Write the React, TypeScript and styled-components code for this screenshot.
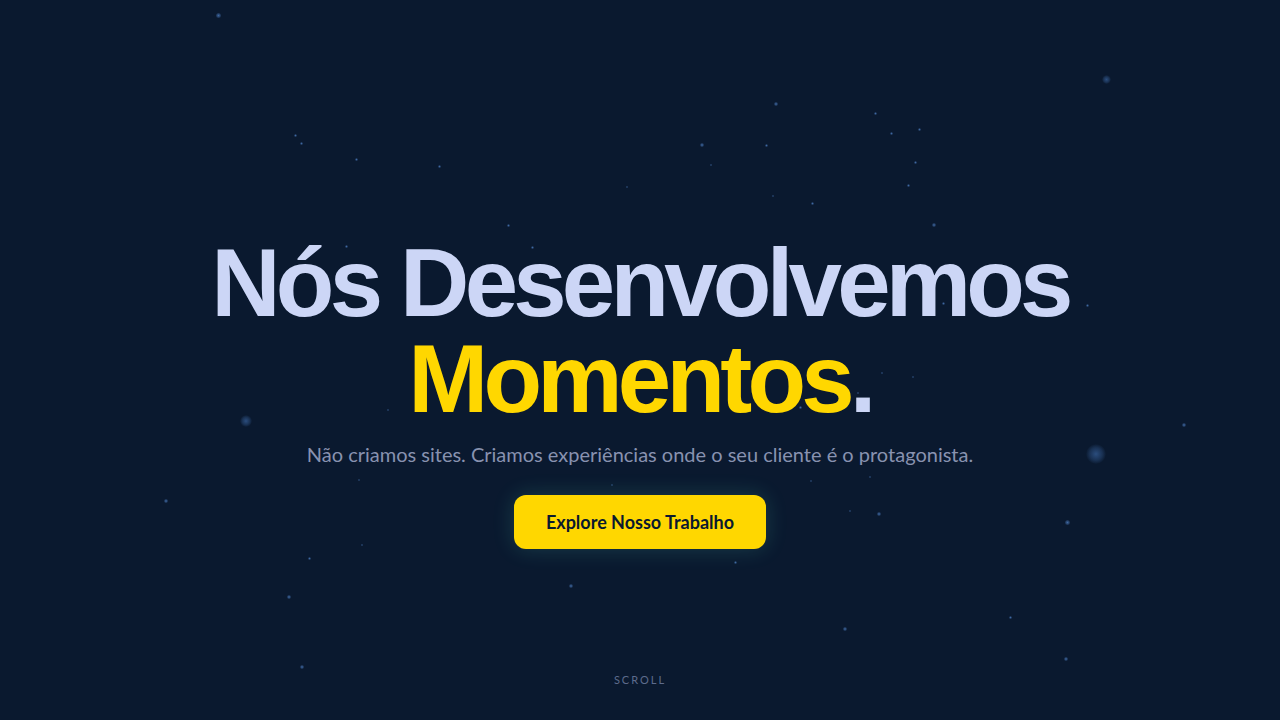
import React from "react";
import styled, { createGlobalStyle } from "styled-components";

const GlobalStyle = createGlobalStyle`
  html, body {
    margin: 0;
    padding: 0;
    background: #0a192f;
    overflow: hidden;
  }
  * { box-sizing: border-box; }
`;

const Hero = styled.section`
  position: relative;
  width: 100%;
  height: 100vh;
  background: #0a192f;
  display: flex;
  flex-direction: column;
  align-items: center;
  justify-content: center;
  padding-top: 64px;
  overflow: hidden;
`;

const StarField = styled.div`
  position: absolute;
  inset: 0;
  pointer-events: none;
`;

const Star = styled.span<{ $size: number; $glow?: boolean }>`
  position: absolute;
  width: ${(p) => p.$size}px;
  height: ${(p) => p.$size}px;
  margin-left: ${(p) => -p.$size / 2}px;
  margin-top: ${(p) => -p.$size / 2}px;
  border-radius: 50%;
  background: ${(p) =>
    p.$glow
      ? "radial-gradient(circle, rgba(70,120,190,0.55) 0%, rgba(70,120,190,0.25) 45%, rgba(70,120,190,0) 72%)"
      : "radial-gradient(circle, rgba(80,130,200,0.75) 0%, rgba(80,130,200,0.3) 55%, rgba(80,130,200,0) 100%)"};
`;

const Content = styled.div`
  position: relative;
  z-index: 1;
  display: flex;
  flex-direction: column;
  align-items: center;
  text-align: center;
`;

const Title = styled.h1`
  margin: 0;
  font-family: "Liberation Sans", Arial, sans-serif;
  font-weight: 700;
  font-size: 96px;
  line-height: 1;
  letter-spacing: -0.05em;
  color: #ccd6f6;
`;

const Line = styled.span`
  display: block;
`;

const Accent = styled.span`
  color: #ffd700;
`;

const Subtitle = styled.p`
  margin: 11px 0 0;
  font-family: Lato, "Open Sans", sans-serif;
  font-size: 20px;
  line-height: 32px;
  color: #8892b0;
`;

const CTA = styled.button`
  margin-top: 25px;
  height: 54px;
  padding: 0 32px;
  border: none;
  border-radius: 12px;
  background: #ffd700;
  color: #0a192f;
  font-family: Lato, "Open Sans", sans-serif;
  font-weight: 700;
  font-size: 18px;
  cursor: pointer;
  box-shadow: 0 0 22px rgba(100, 255, 218, 0.16);
`;

const ScrollHint = styled.div`
  position: absolute;
  bottom: 34px;
  left: 0;
  right: 0;
  text-align: center;
  font-family: Lato, "Open Sans", sans-serif;
  font-size: 11px;
  line-height: 13px;
  letter-spacing: 2px;
  color: #5d6b8c;
`;

const stars: [number, number, number, boolean?][] = [
  [218, 15, 5],
  [1106, 79, 9, true],
  [776, 104, 4],
  [875, 113, 3],
  [919, 129, 3],
  [891, 133, 3],
  [295, 135, 3],
  [301, 143, 3],
  [702, 145, 4],
  [766, 145, 3],
  [356, 159, 3],
  [915, 162, 3],
  [439, 166, 3],
  [711, 165, 2],
  [908, 185, 3],
  [627, 187, 2],
  [773, 196, 2],
  [812, 203, 3],
  [934, 225, 4],
  [508, 225, 3],
  [532, 247, 3],
  [346, 246, 3],
  [374, 272, 2],
  [1087, 305, 3],
  [943, 303, 3],
  [246, 421, 12, true],
  [388, 410, 2],
  [1184, 425, 4],
  [1096, 454, 20, true],
  [913, 377, 2],
  [882, 373, 2],
  [858, 393, 2],
  [800, 407, 3],
  [625, 372, 2],
  [166, 501, 4],
  [359, 480, 2],
  [612, 485, 2],
  [870, 477, 2],
  [811, 481, 2],
  [1067, 522, 5],
  [879, 514, 4],
  [850, 511, 2],
  [362, 545, 2],
  [309, 558, 3],
  [735, 562, 3],
  [571, 586, 4],
  [289, 597, 4],
  [1010, 617, 3],
  [845, 629, 4],
  [1066, 659, 4],
  [302, 667, 4],
];

export default function App() {
  return (
    <>
      <GlobalStyle />
      <Hero>
        <StarField>
          {stars.map(([x, y, s, g], i) => (
            <Star key={i} $size={s} $glow={g} style={{ left: x, top: y }} />
          ))}
        </StarField>
        <Content>
          <Title>
            <Line>Nós Desenvolvemos</Line>
            <Line>
              <Accent>Momentos</Accent>.
            </Line>
          </Title>
          <Subtitle>
            Não criamos sites. Criamos experiências onde o seu cliente é o protagonista.
          </Subtitle>
          <CTA>Explore Nosso Trabalho</CTA>
        </Content>
        <ScrollHint>SCROLL</ScrollHint>
      </Hero>
    </>
  );
}
